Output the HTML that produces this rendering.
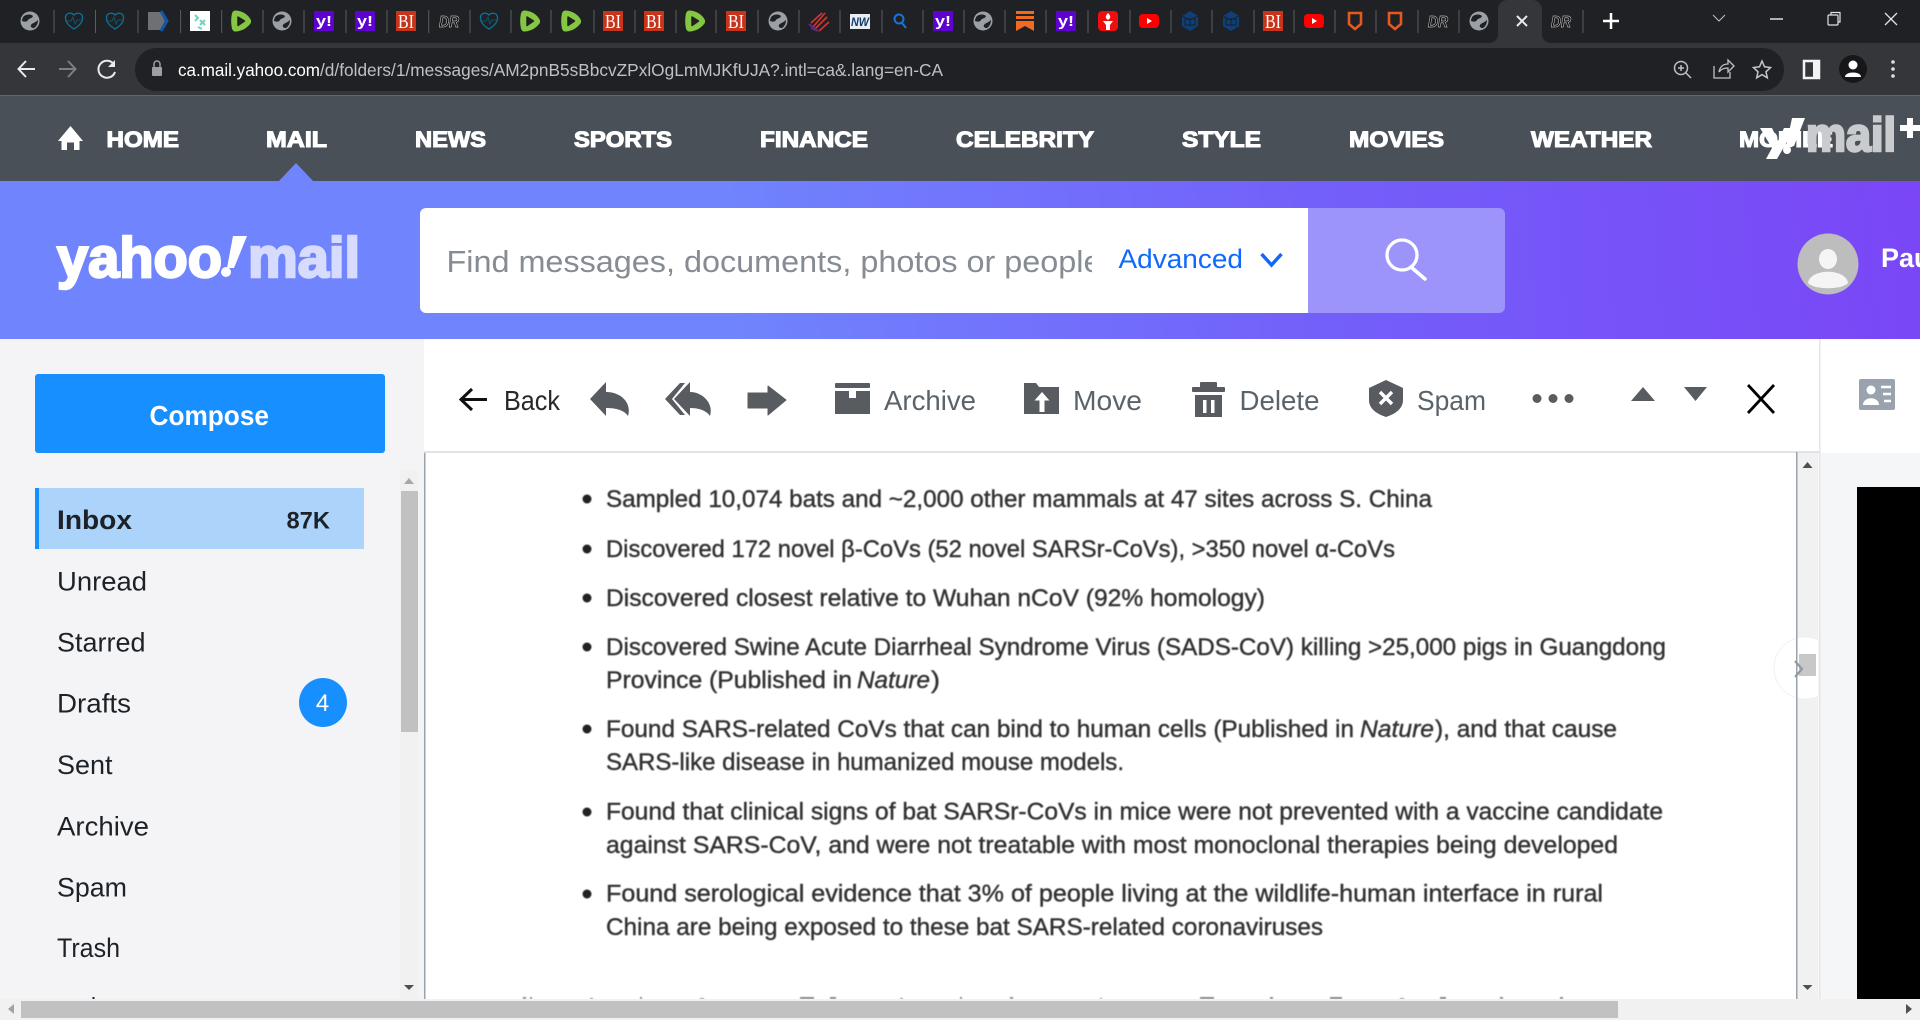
<!DOCTYPE html>
<html lang="en"><head><meta charset="utf-8"><title>Yahoo Mail</title>
<style>
html,body{margin:0;padding:0;background:#fff;overflow:hidden;width:1920px;height:1020px}
svg{display:block}
text{font-family:"Liberation Sans",sans-serif}
.nav{font-weight:700;font-size:22px;fill:#fff;stroke:#fff;stroke-width:1.1}
.side{font-size:27px;fill:#1d2228}
.tb{font-size:28px;fill:#5b636a}
.b{font-size:24px;fill:#333;stroke:#333;stroke-width:.4}
.yi{font-weight:700;font-size:15px;fill:#fff}
.bi{font-family:"Liberation Serif",serif;font-size:20px;fill:#fff}
.dr{font-weight:700;font-style:italic;font-size:16px;fill:#0a0a0a;stroke:#b5b5b5;stroke-width:.7}
</style></head><body>
<svg width="1920" height="1020" viewBox="0 0 1920 1020" xmlns="http://www.w3.org/2000/svg">
<defs>
<linearGradient id="hd" gradientUnits="userSpaceOnUse" x1="0" y1="339" x2="1920" y2="181">
<stop offset="0" stop-color="#7084fd"/><stop offset=".38" stop-color="#7084fd"/><stop offset=".68" stop-color="#7360fa"/><stop offset="1" stop-color="#7a46f6"/></linearGradient>
<filter id="bl" x="-2%" y="-20%" width="104%" height="140%"><feGaussianBlur stdDeviation=".6"/></filter>
<clipPath id="cs"><rect x="440" y="220" width="652" height="80"/></clipPath>
<clipPath id="cr"><rect x="1700" y="600" width="118" height="140"/></clipPath>
<symbol id="globe" viewBox="0 0 20 20"><circle cx="10" cy="10" r="9.500" fill="#9aa0a6"/><path d="M4 5C7 3 11 3 13 5C12 8 9 7 8 9C7 11 5 11 2 10C2 8 3 6 4 5ZM18 9C18 12 17 15 14 17C12 17 10 16 11 14C12 12 15 12 18 9Z" fill="#202124"/></symbol>
<symbol id="heart" viewBox="0 0 20 20"><path d="M10 18C5 15 1 11 1.500 6C2 2 7 1 10 4C13 1 18 2 18.500 6C19 11 15 15 10 18Z" fill="none" stroke="#0d6f91" stroke-width="1.400"/><path d="M3 10H7L9 6L11 13L13 9H17" fill="none" stroke="#0d5470" stroke-width="1"/></symbol>
<symbol id="rum" viewBox="0 0 20 22"><path d="M5 .5C12 1 17 5 19 8.500C20.500 10.500 20.500 12.500 19 14C16 18 11 21 5 21.500C2.500 21.800 1 20 .7 17C0 13 0 9 .7 5C1 2 2.500 .4 5 .5Z" fill="#85c742"/><path d="M7 7L13.500 11L7 15.500Z" fill="#202124" stroke="#202124" stroke-width="1.500" stroke-linejoin="round"/></symbol>
<symbol id="yt" viewBox="0 0 20 20"><rect y="3" width="20" height="14" rx="4" fill="#f00"/><path d="M8 7L13 10L8 13Z" fill="#fff"/></symbol>
<symbol id="hex" viewBox="0 0 20 20"><path d="M10 0L18 5V15L10 20L2 15V5Z" fill="#0f3f78"/><path d="M5 8H15V14H5ZM10 8V15M2 5L10 9L18 5" fill="none" stroke="#1c1e22" stroke-width=".9"/></symbol>
<symbol id="sh" viewBox="0 0 20 20"><path d="M4 2H16V13L10 18L4 13Z" fill="none" stroke="#e3591f" stroke-width="2.600"/></symbol>
</defs>

<!-- tab strip -->
<rect width="1920" height="43" fill="#202124"/>
<path d="M1488 43C1494 43 1498 40 1498 34V10C1498 4 1502 0 1508 0H1532C1538 0 1542 4 1542 10V34C1542 40 1546 43 1552 43Z" fill="#35363a"/>
<path d="M54 10V33M95.500 10V33M138 10V33M180.600 10V33M221.700 10V33M263 10V33M304 10V33M346 10V33M387 10V33M428.700 10V33M470 10V33M511 10V33M551 10V33M594 10V33M635 10V33M676 10V33M716 10V33M758 10V33M799 10V33M840 10V33M882 10V33M923 10V33M964 10V33M1005 10V33M1046 10V33M1088 10V33M1130 10V33M1171 10V33M1212 10V33M1254 10V33M1294 10V33M1335 10V33M1376 10V33M1418 10V33M1459 10V33M1583 10V33" stroke="#5a5d61" stroke-width="1"/>
<use href="#globe" x="20" y="11" width="20" height="20"/>
<use href="#heart" x="64" y="11" width="20" height="20"/>
<use href="#heart" x="105" y="11" width="20" height="20"/>
<path d="M148 12H160L165 21L160 30H148Z" fill="#6e7075"/><path d="M161 11L167 21L161 31" fill="none" stroke="#0f58ad" stroke-width="3"/>
<rect x="190" y="11" width="20" height="20" fill="#fff"/><path d="M195 15L198 18L195 21M200 20L205 25M205 20L200 25M198 27L202 29" fill="none" stroke="#6fd3c0" stroke-width="2"/>
<use href="#rum" x="231" y="10" width="20" height="22"/>
<use href="#globe" x="272" y="11" width="20" height="20"/>
<rect x="314" y="11" width="20" height="20" fill="#5f01d1"/><text x="316" y="26" class="yi" textLength="16" lengthAdjust="spacingAndGlyphs">y!</text>
<rect x="355" y="11" width="20" height="20" fill="#5f01d1"/><text x="357" y="26" class="yi" textLength="16" lengthAdjust="spacingAndGlyphs">y!</text>
<rect x="396" y="11" width="20" height="20" fill="#c8341a"/><text x="398" y="28" class="bi" textLength="16" lengthAdjust="spacingAndGlyphs">BI</text>
<text x="439" y="27" class="dr" textLength="20" lengthAdjust="spacingAndGlyphs">DR</text>
<use href="#heart" x="479" y="11" width="20" height="20"/>
<use href="#rum" x="520" y="10" width="20" height="22"/>
<use href="#rum" x="561" y="10" width="20" height="22"/>
<rect x="603" y="11" width="20" height="20" fill="#c8341a"/><text x="605" y="28" class="bi" textLength="16" lengthAdjust="spacingAndGlyphs">BI</text>
<rect x="644" y="11" width="20" height="20" fill="#c8341a"/><text x="646" y="28" class="bi" textLength="16" lengthAdjust="spacingAndGlyphs">BI</text>
<use href="#rum" x="685" y="10" width="20" height="22"/>
<rect x="726" y="11" width="20" height="20" fill="#c8341a"/><text x="728" y="28" class="bi" textLength="16" lengthAdjust="spacingAndGlyphs">BI</text>
<use href="#globe" x="768" y="11" width="20" height="20"/>
<path d="M813 27L825 13M811 23L822 13M814 30L827 17M819 31L829 22" stroke="#d5352f" stroke-width="1.600" fill="none"/><path d="M811 28L818 31M809 24L816 30" stroke="#5a2a90" stroke-width="2"/>
<rect x="850" y="14" width="20" height="15" fill="#e9eef2"/><text x="851" y="26" font-size="12" font-weight="700" font-style="italic" fill="#123a6a" textLength="18" lengthAdjust="spacingAndGlyphs">NW</text>
<circle cx="899" cy="19" r="4.500" fill="none" stroke="#1a73d8" stroke-width="2"/><path d="M902 23L906 28" stroke="#1a73d8" stroke-width="2"/>
<rect x="933" y="11" width="20" height="20" fill="#5f01d1"/><text x="935" y="26" class="yi" textLength="16" lengthAdjust="spacingAndGlyphs">y!</text>
<use href="#globe" x="973" y="11" width="20" height="20"/>
<path d="M1016 11H1034V14H1016ZM1016 16H1034V19H1016ZM1016 21H1034V31L1025 26L1016 31Z" fill="#f26a21"/>
<rect x="1056" y="11" width="20" height="20" fill="#5f01d1"/><text x="1058" y="26" class="yi" textLength="16" lengthAdjust="spacingAndGlyphs">y!</text>
<rect x="1098" y="11" width="20" height="20" rx="4" fill="#f00d0d"/><path d="M1108 13C1111 16 1111 18 1108 20C1105 18 1105 16 1108 13ZM1103 21H1113L1110 25V30H1106V25Z" fill="#fff"/>
<use href="#yt" x="1139" y="11" width="20" height="20"/>
<use href="#hex" x="1180" y="11" width="20" height="20"/>
<use href="#hex" x="1221" y="11" width="20" height="20"/>
<rect x="1263" y="11" width="20" height="20" fill="#c8341a"/><text x="1265" y="28" class="bi" textLength="16" lengthAdjust="spacingAndGlyphs">BI</text>
<use href="#yt" x="1304" y="11" width="20" height="20"/>
<use href="#sh" x="1345" y="11" width="20" height="20"/>
<use href="#sh" x="1385" y="11" width="20" height="20"/>
<text x="1428" y="27" class="dr" textLength="20" lengthAdjust="spacingAndGlyphs">DR</text>
<use href="#globe" x="1469" y="11" width="20" height="20"/>
<path d="M1517 16L1527 26M1527 16L1517 26" stroke="#e8eaed" stroke-width="2"/>
<text x="1551" y="27" class="dr" textLength="20" lengthAdjust="spacingAndGlyphs">DR</text>
<path d="M1611 13V29M1603 21H1619" stroke="#fff" stroke-width="2.500"/>
<path d="M1713 15L1719 21L1725 15" fill="none" stroke="#bdc1c6" stroke-width="1"/>
<path d="M1770 19H1783" stroke="#dfe1e5" stroke-width="1.500"/>
<rect x="1828" y="15" width="10" height="10" fill="#202124" stroke="#dfe1e5" stroke-width="1.200" rx="1"/><path d="M1831 15V12.500H1840V22H1838" fill="none" stroke="#dfe1e5" stroke-width="1.200"/>
<path d="M1885 13L1897 25M1897 13L1885 25" stroke="#dfe1e5" stroke-width="1.300"/>

<!-- toolbar -->
<rect y="43" width="1920" height="52" fill="#35363a"/>
<rect y="95" width="1920" height="1" fill="#63666b"/>
<path d="M157 48H1762C1775 48 1784 58 1784 69.500C1784 81 1775 91 1762 91H157C144 91 135 81 135 69.500C135 58 144 48 157 48Z" fill="#202124"/>
<path d="M35 69H19M26 61L18.500 69L26 77" fill="none" stroke="#e8eaed" stroke-width="2"/>
<path d="M75 69H59M68 61L75.500 69L68 77" fill="none" stroke="#7c7f84" stroke-width="2"/>
<path d="M114 64.500A8.500 8.500 0 1 0 115 72" fill="none" stroke="#e8eaed" stroke-width="2"/><path d="M115 60V67H108Z" fill="#e8eaed"/>
<rect x="152" y="67" width="10" height="9" rx="1" fill="#9aa0a6"/><path d="M154 67V64A3 3 0 0 1 160 64V67" fill="none" stroke="#9aa0a6" stroke-width="1.500"/>
<text x="178" y="76" font-size="17.500" fill="#fff" textLength="142" lengthAdjust="spacingAndGlyphs">ca.mail.yahoo.com</text>
<text x="320" y="76" font-size="17.500" fill="#bdc1c6" textLength="623" lengthAdjust="spacingAndGlyphs">/d/folders/1/messages/AM2pnB5sBbcvZPxlOgLmMJKfUJA?.intl=ca&amp;.lang=en-CA</text>
<circle cx="1681" cy="68" r="6.500" fill="none" stroke="#bdc1c6" stroke-width="1.500"/><path d="M1686 73L1691 78M1678 68H1684M1681 65V71" stroke="#bdc1c6" stroke-width="1.500"/>
<path d="M1714 66V78H1730V72M1719 72C1720 66 1724 64 1728 64V60L1734 66L1728 72V68C1724 68 1721 69 1719 72Z" fill="none" stroke="#bdc1c6" stroke-width="1.300"/>
<path d="M1762 61L1764.500 66.800L1770.500 67.500L1766 71.800L1767.300 77.800L1762 74.600L1756.700 77.800L1758 71.800L1753.500 67.500L1759.500 66.800Z" fill="none" stroke="#c4c7cb" stroke-width="1.500"/>
<rect x="1804" y="61" width="15" height="17" fill="none" stroke="#f1f3f4" stroke-width="2.500"/><rect x="1813" y="61" width="6" height="17" fill="#f1f3f4"/>
<circle cx="1853" cy="69" r="14" fill="#171719"/><circle cx="1853" cy="65" r="4.500" fill="#fff"/><path d="M1845 77C1845 71 1861 71 1861 77Z" fill="#fff"/>
<circle cx="1893" cy="62" r="1.800" fill="#dfe1e5"/><circle cx="1893" cy="69" r="1.800" fill="#dfe1e5"/><circle cx="1893" cy="76" r="1.800" fill="#dfe1e5"/>

<!-- nav -->
<rect y="96" width="1920" height="85" fill="#4a5058"/>
<path d="M70.500 126L83 141H79.500V150H74V142.500H67V150H61.500V141H58Z" fill="#fff"/>
<text x="106.500" y="147" class="nav" textLength="72.500" lengthAdjust="spacingAndGlyphs">HOME</text>
<text x="266" y="147" class="nav" textLength="61" lengthAdjust="spacingAndGlyphs">MAIL</text>
<text x="415" y="147" class="nav" textLength="71" lengthAdjust="spacingAndGlyphs">NEWS</text>
<text x="574" y="147" class="nav" textLength="98" lengthAdjust="spacingAndGlyphs">SPORTS</text>
<text x="760" y="147" class="nav" textLength="108" lengthAdjust="spacingAndGlyphs">FINANCE</text>
<text x="956" y="147" class="nav" textLength="138" lengthAdjust="spacingAndGlyphs">CELEBRITY</text>
<text x="1182" y="147" class="nav" textLength="79" lengthAdjust="spacingAndGlyphs">STYLE</text>
<text x="1349" y="147" class="nav" textLength="95" lengthAdjust="spacingAndGlyphs">MOVIES</text>
<text x="1531" y="147" class="nav" textLength="121" lengthAdjust="spacingAndGlyphs">WEATHER</text>
<text x="1739" y="147" class="nav" textLength="94" lengthAdjust="spacingAndGlyphs">MOBILE</text>
<text x="1806" y="151" font-size="47" font-weight="700" fill="#c9cbce" stroke="#c9cbce" stroke-width="2.500" textLength="90" lengthAdjust="spacingAndGlyphs">mail</text>
<path d="M1760 128H1772L1778 141L1784 128H1795L1777 159H1766L1772 148Z" fill="#fff"/>
<path d="M1792 118H1805L1794 146H1786Z" fill="#fff"/><circle cx="1787" cy="150" r="4" fill="#fff"/>
<path d="M1910 118V138M1900 128H1920" stroke="#fff" stroke-width="6"/>

<!-- header -->
<rect y="181" width="1920" height="158" fill="url(#hd)"/>
<path d="M279 181L296 163L313 181Z" fill="#7084fd"/>
<text x="57" y="277" font-size="57" font-weight="700" fill="#fff" stroke="#fff" stroke-width="2.500" textLength="165" lengthAdjust="spacingAndGlyphs">yahoo</text>
<path d="M233 236H247L234 268H227Z" fill="#fff"/><circle cx="226" cy="272" r="5" fill="#fff"/>
<text x="248" y="277" font-size="57" font-weight="700" fill="#d7dbfd" stroke="#d7dbfd" stroke-width="2.500" textLength="112" lengthAdjust="spacingAndGlyphs">mail</text>
<path d="M426 208H1308V313H426A6 6 0 0 1 420 307V214A6 6 0 0 1 426 208Z" fill="#fff"/>
<path d="M1308 208H1499A6 6 0 0 1 1505 214V307A6 6 0 0 1 1499 313H1308Z" fill="#9c94fb"/>
<g clip-path="url(#cs)"><text x="446.500" y="272" font-size="31" fill="#868c93" textLength="655" lengthAdjust="spacingAndGlyphs">Find messages, documents, photos or people</text></g>
<text x="1118.500" y="268" font-size="27" fill="#0f69ff" textLength="124.500" lengthAdjust="spacingAndGlyphs">Advanced</text>
<path d="M1261.500 254L1271.500 265L1281.500 254" fill="none" stroke="#0f69ff" stroke-width="3.500"/>
<circle cx="1402" cy="255" r="15" fill="none" stroke="#fff" stroke-width="3.300"/><path d="M1411 267L1425 279" stroke="#fff" stroke-width="3.600" stroke-linecap="round"/>
<circle cx="1828" cy="264" r="30.500" fill="#bdbdbd"/><ellipse cx="1828" cy="259" rx="9" ry="10" fill="#f5f5f5"/><path d="M1808 283C1810 268 1846 268 1848 283C1842 290 1814 290 1808 283Z" fill="#f5f5f5"/>
<text x="1881" y="267" font-size="27" font-weight="700" fill="#fff">Paul</text>

<!-- sidebar -->
<rect y="339" width="424" height="660" fill="#f4f4f7"/>
<rect x="400" y="470" width="18" height="529" fill="#f1f1f2"/>
<rect x="401" y="491" width="17" height="241" fill="#c1c1c1"/>
<path d="M409 478L414 484H404Z" fill="#a8a8a8"/><path d="M404 985H414L409 990Z" fill="#505050"/>
<rect x="35" y="374" width="350" height="79" rx="3" fill="#188fff"/>
<text x="149.500" y="425" font-size="28" font-weight="700" fill="#fff" textLength="119.500" lengthAdjust="spacingAndGlyphs">Compose</text>
<rect x="35" y="488" width="329" height="61" fill="#acd3f9"/><rect x="35" y="488" width="4" height="61" fill="#188fff"/>
<text x="57" y="529" class="side" style="font-weight:700" textLength="75" lengthAdjust="spacingAndGlyphs">Inbox</text>
<text x="286.500" y="528.500" font-size="24" font-weight="700" fill="#1d2228" textLength="43.500" lengthAdjust="spacingAndGlyphs">87K</text>
<text x="57" y="590.500" class="side" textLength="90" lengthAdjust="spacingAndGlyphs">Unread</text>
<text x="57" y="651.500" class="side" textLength="88.500" lengthAdjust="spacingAndGlyphs">Starred</text>
<text x="57" y="712.500" class="side" textLength="74" lengthAdjust="spacingAndGlyphs">Drafts</text>
<text x="57" y="774" class="side" textLength="55.500" lengthAdjust="spacingAndGlyphs">Sent</text>
<text x="57" y="835.500" class="side" textLength="92" lengthAdjust="spacingAndGlyphs">Archive</text>
<text x="57" y="896.500" class="side" textLength="70" lengthAdjust="spacingAndGlyphs">Spam</text>
<text x="57" y="957" class="side" textLength="63" lengthAdjust="spacingAndGlyphs">Trash</text>
<rect x="92.500" y="997" width="2" height="2" fill="#1d2228"/>
<ellipse cx="323" cy="702.500" rx="24" ry="24.500" fill="#188fff"/>
<text x="322.500" y="711" font-size="24" fill="#fff" text-anchor="middle">4</text>

<!-- message -->
<rect x="424" y="452" width="1.500" height="547" fill="#9aa2ab"/>
<rect x="424" y="451" width="1395" height="2" fill="#dfe3e8"/>
<rect x="1796" y="452" width="1.500" height="547" fill="#9aa2ab"/>
<rect x="1819" y="339" width="1.500" height="660" fill="#e3e5ea"/>
<rect x="1797.500" y="453" width="21" height="546" fill="#f1f1f1"/>
<path d="M1807.500 462L1812.500 468H1802.500Z" fill="#505050"/><path d="M1802.500 985H1812.500L1807.500 990Z" fill="#505050"/>
<rect x="1820.500" y="453" width="100" height="546" fill="#f5f6f8"/>
<rect x="1857" y="487" width="63" height="512" fill="#000"/>

<!-- toolbar icons -->
<path d="M487 399.500H462M472 389L461 399.500L472 410" fill="none" stroke="#111" stroke-width="3"/>
<text x="504" y="410" font-size="28" fill="#26282a" textLength="56" lengthAdjust="spacingAndGlyphs">Back</text>
<path d="M590 399L606 382V392C622 392 632 404 628 416C624 410 616 408 606 408V416Z" fill="#585c60"/>
<path d="M665 399L680 383H685L672 399L685 415H680Z" fill="#585c60"/><path d="M674 399L690 382V392C703 392 714 404 710 416C706 410 698 408 690 408V416Z" fill="#585c60"/>
<path d="M748 393H768V386L786 400L768 415V408H748Z" fill="#585c60" stroke="#585c60" stroke-width="1" stroke-linejoin="round"/>
<rect x="835" y="383" width="35" height="5" rx="1" fill="#585c60"/><path d="M835 391H849V398H856V391H870V414H835Z" fill="#585c60"/>
<text x="884" y="410" class="tb" textLength="92" lengthAdjust="spacingAndGlyphs">Archive</text>
<path d="M1024 383H1036L1039 387H1059V414H1024Z" fill="#585c60"/><path d="M1042 392L1034.500 400.500H1039.500V412H1044.500V400.500H1049.500Z" fill="#fff"/>
<text x="1073" y="410" class="tb" textLength="69" lengthAdjust="spacingAndGlyphs">Move</text>
<rect x="1192" y="387" width="33" height="5" rx="1" fill="#585c60"/><rect x="1200" y="382" width="17" height="6" rx="1" fill="#585c60"/><rect x="1195" y="395" width="27" height="22" fill="#585c60"/><rect x="1203" y="400" width="3.500" height="13" fill="#fff"/><rect x="1211" y="400" width="3.500" height="13" fill="#fff"/>
<text x="1239.500" y="410" class="tb" textLength="80" lengthAdjust="spacingAndGlyphs">Delete</text>
<path d="M1386 380L1403 388V400C1403 409 1395 414 1386 417C1377 414 1369 409 1369 400V388Z" fill="#585c60"/><path d="M1380 392L1392 404M1392 392L1380 404" stroke="#fff" stroke-width="3.400"/>
<text x="1417" y="410" class="tb" textLength="69" lengthAdjust="spacingAndGlyphs">Spam</text>
<circle cx="1537" cy="398.500" r="4.500" fill="#585c60"/><circle cx="1553" cy="398.500" r="4.500" fill="#585c60"/><circle cx="1569" cy="398.500" r="4.500" fill="#585c60"/>
<path d="M1643 387L1655 401H1631Z" fill="#585c60"/><path d="M1684 387H1707L1695.500 401Z" fill="#585c60"/>
<path d="M1748 385L1774 413M1774 385L1748 413" stroke="#000" stroke-width="2.800"/>
<rect x="1859" y="379" width="36" height="31" rx="2" fill="#9aa3ad"/><circle cx="1871" cy="390" r="4.500" fill="#fff"/><path d="M1863 405C1863 396 1879 396 1879 405Z" fill="#fff"/><path d="M1881 387H1891M1883 394H1891M1884 401H1891" stroke="#fff" stroke-width="2.500"/>

<!-- body text (image of slide) -->
<g filter="url(#bl)">
<circle cx="587" cy="499" r="4.500" fill="#222"/><circle cx="587" cy="549" r="4.500" fill="#222"/><circle cx="587" cy="598" r="4.500" fill="#222"/><circle cx="587" cy="647" r="4.500" fill="#222"/><circle cx="587" cy="729" r="4.500" fill="#222"/><circle cx="587" cy="812" r="4.500" fill="#222"/><circle cx="587" cy="894" r="4.500" fill="#222"/>
<text x="606" y="507" class="b" textLength="826" lengthAdjust="spacingAndGlyphs">Sampled 10,074 bats and ~2,000 other mammals at 47 sites across S. China</text>
<text x="606" y="557" class="b" textLength="789" lengthAdjust="spacingAndGlyphs">Discovered 172 novel β-CoVs (52 novel SARSr-CoVs), &gt;350 novel α-CoVs</text>
<text x="606" y="606" class="b" textLength="659" lengthAdjust="spacingAndGlyphs">Discovered closest relative to Wuhan nCoV (92% homology)</text>
<text x="606" y="655" class="b" textLength="1060" lengthAdjust="spacingAndGlyphs">Discovered Swine Acute Diarrheal Syndrome Virus (SADS-CoV) killing &gt;25,000 pigs in Guangdong</text>
<text x="606" y="688" class="b" textLength="246" lengthAdjust="spacingAndGlyphs">Province (Published in</text>
<text x="857" y="688" class="b" font-style="italic" textLength="73" lengthAdjust="spacingAndGlyphs">Nature</text>
<text x="931" y="688" class="b" textLength="9" lengthAdjust="spacingAndGlyphs">)</text>
<text x="606" y="737" class="b" textLength="748" lengthAdjust="spacingAndGlyphs">Found SARS-related CoVs that can bind to human cells (Published in</text>
<text x="1360" y="737" class="b" font-style="italic" textLength="74" lengthAdjust="spacingAndGlyphs">Nature</text>
<text x="1435" y="737" class="b" textLength="182" lengthAdjust="spacingAndGlyphs">), and that cause</text>
<text x="606" y="770" class="b" textLength="518" lengthAdjust="spacingAndGlyphs">SARS-like disease in humanized mouse models.</text>
<text x="606" y="819.500" class="b" textLength="1057" lengthAdjust="spacingAndGlyphs">Found that clinical signs of bat SARSr-CoVs in mice were not prevented with a vaccine candidate</text>
<text x="606" y="853" class="b" textLength="1012" lengthAdjust="spacingAndGlyphs">against SARS-CoV, and were not treatable with most monoclonal therapies being developed</text>
<text x="606" y="901.500" class="b" textLength="997" lengthAdjust="spacingAndGlyphs">Found serological evidence that 3% of people living at the wildlife-human interface in rural</text>
<text x="606" y="935" class="b" textLength="717" lengthAdjust="spacingAndGlyphs">China are being exposed to these bat SARS-related coronaviruses</text>
<path d="M523 997h3v2h-3ZM530 997h2v2h-2ZM590 998h3v1h-3ZM640 997h2v2h-2ZM700 998h4v1h-4ZM800 997h14v2h-14ZM830 997h6v2h-6ZM900 998h3v1h-3ZM960 997h2v2h-2ZM1010 997h3v2h-3ZM1100 998h2v1h-2ZM1200 997h14v2h-14ZM1270 997h3v2h-3ZM1330 997h12v2h-12ZM1400 998h4v1h-4ZM1440 997h6v2h-6ZM1500 997h3v2h-3ZM1560 997h3v2h-3Z" fill="#8a8a8a"/>
</g>

<!-- next arrow -->
<g clip-path="url(#cr)"><circle cx="1805" cy="668" r="31" fill="#fff" stroke="#f0f0f2" stroke-width="1"/></g>
<rect x="1796" y="636" width="1.500" height="64" fill="#9aa2ab"/>
<rect x="1799" y="654" width="17" height="22" fill="#c8c8c8"/>
<path d="M1795 661L1802 669L1795 677" fill="none" stroke="#8f98a3" stroke-width="2.200"/>

<!-- bottom scrollbar -->
<rect y="999" width="1920" height="21" fill="#f1f1f1"/>
<rect x="21" y="1001" width="1597" height="17" fill="#c1c1c1"/>
<path d="M14 1004V1014L8 1009Z" fill="#a3a3a3"/><path d="M1906 1004V1014L1912 1009Z" fill="#505050"/>
</svg>
</body></html>
